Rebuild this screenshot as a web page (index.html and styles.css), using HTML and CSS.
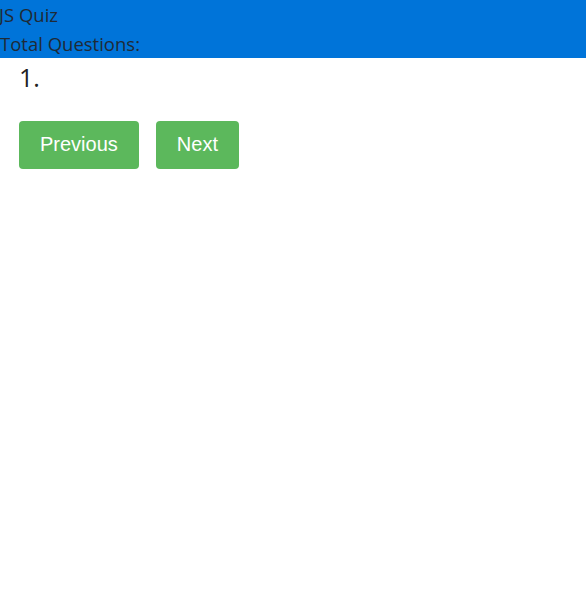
FILE: index.html
```html
<!DOCTYPE html>
<html lang="en">
<head>
  <meta charset="UTF-8" />
  <title>JS Quiz</title>
  <link rel="stylesheet" href="styles.css">
</head>
<body>
<header class="quiz-header">
  <div class="title">JS Quiz</div>
  <div class="total">Total Questions: <span id="total"></span></div>
</header>

<div class="quiz">
  <div class="question"><span id="qnum">1</span>. <span id="qtext"></span></div>
  <div class="controls">
    <button class="btn">Previous</button>
    <button class="btn">Next</button>
  </div>
</div>
</body>
</html>
```

FILE: styles.css
```css
body {
  margin: 0;
  font-family: 'Open Sans', 'Noto Sans', sans-serif;
  color: #222;
  background: #fff;
}

.quiz-header {
  background-color: #0074D9;
  color: #1f2a36;
  font-size: 18.5px;
  line-height: 29px;
}

.title {
  margin-left: -1px;
}

.quiz {
  padding: 0 19px;
}

.question {
  font-size: 25px;
  line-height: 38px;
  color: #222;
}

.controls {
  display: flex;
  gap: 17px;
  margin-top: 25px;
}

.btn {
  font-family: 'Liberation Sans', Arial, sans-serif;
  font-size: 20px;
  background-color: #5CB85C;
  color: white;
  border: none;
  border-radius: 4px;
  height: 48px;
  padding: 0 21px 2px;
  cursor: pointer;
}
```
